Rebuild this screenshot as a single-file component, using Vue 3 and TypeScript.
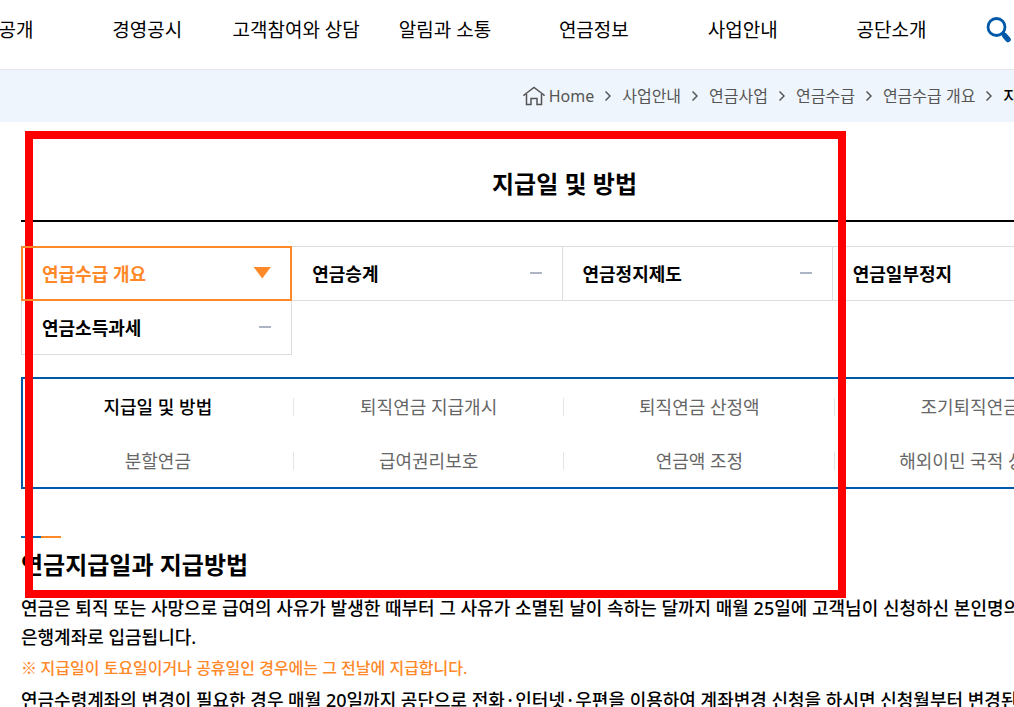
<script setup lang="ts">
interface LinkItem {
  label: string
  active?: boolean
}

const mainMenu: string[] = ['정보공개', '경영공시', '고객참여와 상담', '알림과 소통', '연금정보', '사업안내', '공단소개']

const trail: string[] = ['사업안내', '연금사업', '연금수급', '연금수급 개요']

const tabs: LinkItem[] = [
  { label: '연급수급 개요', active: true },
  { label: '연금승계' },
  { label: '연금정지제도' },
  { label: '연금일부정지' },
  { label: '연금소득과세' },
]

const subMenu: LinkItem[] = [
  { label: '지급일 및 방법', active: true },
  { label: '퇴직연금 지급개시' },
  { label: '퇴직연금 산정액' },
  { label: '조기퇴직연금' },
  { label: '분할연금' },
  { label: '급여권리보호' },
  { label: '연금액 조정' },
  { label: '해외이민 국적 상실' },
]
</script>

<template>
  <div class="page">
    <header class="header">
      <nav class="main-nav" aria-label="주 메뉴">
        <a v-for="item in mainMenu" :key="item" href="#">{{ item }}</a>
      </nav>
      <button class="search" type="button" aria-label="검색">
        <svg width="28" height="28" viewBox="0 0 28 28" fill="none" stroke="#0157a8">
          <circle cx="10.500" cy="11" r="8.500" stroke-width="2.800" />
          <path d="M16.500 17l2.500 2.500" stroke-width="4" />
          <path d="M19 20l3 3.500" stroke-width="5.500" stroke-linecap="round" />
        </svg>
      </button>
    </header>

    <nav class="breadcrumb" aria-label="현재 위치">
      <a class="home" href="#">
        <svg width="22" height="20" viewBox="0 0 22 20" fill="none" stroke="#555" stroke-width="1.5">
          <path d="M1 10V9L11 1.500 21 9v1M3.500 8v10.500H8v-6h6v6h4.500V8" />
        </svg>
        Home
      </a>
      <template v-for="item in trail" :key="item">
        <svg class="chevron" width="6" height="10" viewBox="0 0 6 10" fill="none" stroke="#555" stroke-width="1.5">
          <path d="M.5.5L5 5 .5 9.500" />
        </svg>
        <a href="#">{{ item }}</a>
      </template>
      <svg class="chevron" width="6" height="10" viewBox="0 0 6 10" fill="none" stroke="#555" stroke-width="1.5">
        <path d="M.5.5L5 5 .5 9.500" />
      </svg>
      <strong>지급일 및 방법</strong>
    </nav>

    <main class="content">
      <h1>지급일 및 방법</h1>

      <nav class="tabs" aria-label="연금수급 메뉴">
        <a v-for="tab in tabs" :key="tab.label" href="#" :class="{ active: tab.active }">
          {{ tab.label }}
          <span class="marker"></span>
        </a>
      </nav>

      <nav class="sub-menu" aria-label="하위 메뉴">
        <a v-for="item in subMenu" :key="item.label" href="#" :class="{ active: item.active }">{{ item.label }}</a>
      </nav>

      <section class="article">
        <h2>연금지급일과 지급방법</h2>
        <p>
          연금은 퇴직 또는 사망으로 급여의 사유가 발생한 때부터 그 사유가 소멸된 날이 속하는 달까지 매월 25일에 고객님이 신청하신 본인명의 은행계좌로 입금됩니다.
        </p>
        <p class="note"><span class="symbol">※ </span>지급일이 토요일이거나 공휴일인 경우에는 그 전날에 지급합니다.</p>
        <p>
          연금수령계좌의 변경이 필요한 경우 매월 20일까지 공단으로 전화<span class="symbol">·</span>인터넷<span class="symbol">·</span>우편을 이용하여 계좌변경 신청을 하시면 신청월부터 변경된
        </p>
      </section>
    </main>

    <div class="highlight" aria-hidden="true"></div>
  </div>
</template>

<style>
body {
  margin: 0;
  background: #fff;
}
</style>

<style scoped>
.page {
  position: relative;
  height: 100vh;
  overflow: hidden;
  font-family: "Noto Sans", "Noto Sans CJK KR", sans-serif;
  font-size: 18px;
  line-height: 29px;
  color: #000;
  word-break: keep-all;
}

a {
  color: inherit;
  text-decoration: none;
}

.header {
  display: flex;
  margin-left: -76px;
  height: 69px;
  border-bottom: 1px solid #e3e7ea;
}

.main-nav {
  flex: 1;
  display: grid;
  grid-template-columns: repeat(7, 1fr);
  align-items: center;
  padding-bottom: 8px;
  font-size: 19px;
  text-align: center;
  white-space: nowrap;
}

.search {
  width: 48px;
  padding: 0 0 9px 20px;
  border: 0;
  background: none;
  display: flex;
  align-items: center;
}

.search svg {
  flex: none;
}

.breadcrumb {
  display: flex;
  align-items: center;
  justify-content: flex-end;
  margin-right: -86px;
  height: 52px;
  background: #eff5fc;
  font-size: 16px;
  color: #555;
  white-space: nowrap;
}

.home {
  display: flex;
  align-items: center;
  gap: 4px;
}

.chevron {
  margin: 0 11px;
}

.breadcrumb strong {
  font-weight: 500;
  color: #000;
}

.content {
  margin: 0 -94px 0 21px;
}

h1 {
  margin: 0 0 24px;
  padding: 44px 0 18px;
  border-bottom: 2px solid #000;
  font-size: 24px;
  line-height: 36px;
  font-weight: 700;
  text-align: center;
}

.tabs {
  display: grid;
  grid-template-columns: repeat(4, 1fr);
  margin-right: 6px;
}

.tabs a {
  display: flex;
  align-items: center;
  justify-content: space-between;
  box-sizing: border-box;
  height: 55px;
  margin: 0 -1px -1px 0;
  padding: 2px 20px 0;
  border: 1px solid #ddd;
  font-weight: 700;
}

.tabs a.active {
  z-index: 1;
  padding: 2px 19px 0;
  border: 2px solid #ff8828;
  color: #ff8828;
}

.marker {
  width: 12px;
  height: 2px;
  margin-bottom: 4px;
  background: #adb5c5;
}

.active .marker {
  width: 18px;
  height: 12px;
  background: #ff8828;
  clip-path: polygon(0 0, 100% 0, 50% 100%);
}

.sub-menu {
  display: grid;
  grid-template-columns: repeat(4, 1fr);
  margin-top: 23px;
  border: 2px solid #0157a8;
  color: #666;
  text-align: center;
}

.sub-menu a {
  display: flex;
  align-items: center;
  justify-content: center;
  box-sizing: border-box;
  height: 54px;
  padding-top: 2px;
}

.sub-menu a::after {
  content: "";
  width: 1px;
  height: 18px;
  margin-left: auto;
  background: #e5e5e5;
}

.sub-menu a::before {
  content: "";
  margin-right: auto;
}

.sub-menu a.active {
  color: #000;
  font-weight: 500;
}

.article {
  margin-top: 47px;
  font-weight: 500;
}

.article::before {
  content: "";
  display: block;
  width: 40px;
  height: 2px;
  background: linear-gradient(90deg, #0168b7 50%, #ff8828 50%);
}

h2 {
  margin: 0;
  padding: 8px 0 10px;
  font-size: 24px;
  line-height: 38px;
  font-weight: 700;
}

p {
  margin: 0;
  padding-right: 20px;
}

.symbol {
  font-family: "Noto Sans CJK KR", sans-serif;
  line-height: 1;
}

.note {
  margin: 2px 0 3px;
  font-size: 16px;
  line-height: 29px;
  color: #ff8828;
}

.highlight {
  position: absolute;
  top: 131px;
  left: 25px;
  right: 168px;
  height: 451px;
  border: 8px solid #f00;
  pointer-events: none;
}
</style>
